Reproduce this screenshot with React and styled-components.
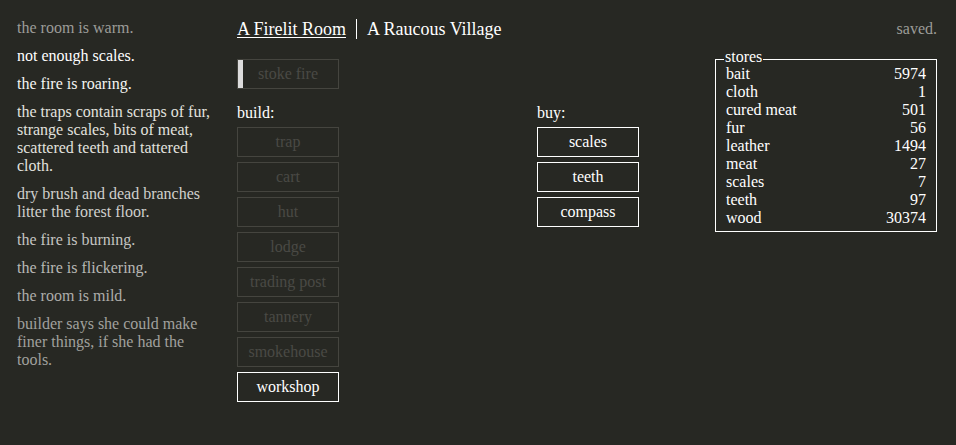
import React from 'react';
import styled, { createGlobalStyle } from 'styled-components';

const GlobalStyle = createGlobalStyle`
  html, body {
    margin: 0;
    padding: 0;
    background: #272823;
  }
  body {
    font-family: 'Liberation Serif', 'Times New Roman', serif;
    font-size: 16px;
    color: #fff;
  }
`;

const notifications = [
  { text: 'the room is warm.', color: '#9c9c98' },
  { text: 'not enough scales.', color: '#ffffff' },
  { text: 'the fire is roaring.', color: '#f4f4f2' },
  {
    text: 'the traps contain scraps of fur, strange scales, bits of meat, scattered teeth and tattered cloth.',
    color: '#e2e2df',
  },
  { text: 'dry brush and dead branches litter the forest floor.', color: '#d0d0cd' },
  { text: 'the fire is burning.', color: '#c4c4c1' },
  { text: 'the fire is flickering.', color: '#b8b8b5' },
  { text: 'the room is mild.', color: '#adadaa' },
  { text: 'builder says she could make finer things, if she had the tools.', color: '#a1a19e' },
];

const buildings = [
  { name: 'trap', on: false },
  { name: 'cart', on: false },
  { name: 'hut', on: false },
  { name: 'lodge', on: false },
  { name: 'trading post', on: false },
  { name: 'tannery', on: false },
  { name: 'smokehouse', on: false },
  { name: 'workshop', on: true },
];

const trades = ['scales', 'teeth', 'compass'];

const stores = [
  ['bait', 5974],
  ['cloth', 1],
  ['cured meat', 501],
  ['fur', 56],
  ['leather', 1494],
  ['meat', 27],
  ['scales', 7],
  ['teeth', 97],
  ['wood', 30374],
];

const Page = styled.div`
  display: flex;
  padding: 19px 19px 0 17px;
  min-height: 445px;
  box-sizing: border-box;
`;

const Notifications = styled.div`
  width: 200px;
  margin-right: 20px;
  flex-shrink: 0;
`;

const Notification = styled.div`
  color: ${({ $color }) => $color};
  line-height: 18px;
  margin-bottom: 10px;
`;

const Main = styled.div`
  flex: 1;
  display: flex;
  flex-direction: column;
`;

const Header = styled.div`
  display: flex;
  align-items: center;
  height: 20px;
  font-size: 18px;
`;

const Tab = styled.span`
  line-height: 20px;
  text-decoration: ${({ $active }) => ($active ? 'underline' : 'none')};
  text-underline-offset: 2px;
  text-decoration-thickness: 1px;
`;

const TabDivider = styled.span`
  width: 1px;
  height: 20px;
  background: #fff;
  margin: 0 10px;
`;

const Saved = styled.span`
  margin-left: auto;
  font-size: 16px;
  color: #9c9c98;
`;

const Panels = styled.div`
  display: flex;
  margin-top: 20px;
`;

const BuildColumn = styled.div`
  width: 300px;
`;

const BuyColumn = styled.div`
  width: 178px;
  padding-top: 45px;
`;

const Label = styled.div`
  line-height: 18px;
  margin-bottom: 5px;
`;

const Button = styled.div`
  position: relative;
  width: 80px;
  padding: 5px 10px;
  line-height: 18px;
  text-align: center;
  border: 1px solid ${({ $off }) => ($off ? '#45453f' : '#fff')};
  color: ${({ $off }) => ($off ? '#4a4a45' : '#fff')};
  margin-bottom: 5px;
  white-space: nowrap;
`;

const Cooldown = styled.div`
  position: absolute;
  left: 0;
  top: 0;
  bottom: 0;
  width: 5px;
  background: #dcdcdc;
`;

const Spacer = styled.div`
  height: 10px;
`;

const Stores = styled.div`
  position: relative;
  margin-left: auto;
  width: 200px;
  padding: 5px 10px 4px;
  border: 1px solid #fff;
  align-self: flex-start;
`;

const Legend = styled.div`
  position: absolute;
  top: -11px;
  left: 8px;
  padding: 0 1px;
  line-height: 16px;
  background: #272823;
`;

const StoreRow = styled.div`
  display: flex;
  justify-content: space-between;
  line-height: 18px;
`;

export default function App() {
  return (
    <>
      <GlobalStyle />
      <Page>
        <Notifications>
          {notifications.map((n, i) => (
            <Notification key={i} $color={n.color}>
              {n.text}
            </Notification>
          ))}
        </Notifications>
        <Main>
          <Header>
            <Tab $active>A Firelit Room</Tab>
            <TabDivider />
            <Tab>A Raucous Village</Tab>
            <Saved>saved.</Saved>
          </Header>
          <Panels>
            <BuildColumn>
              <Button $off>
                <Cooldown />
                stoke fire
              </Button>
              <Spacer />
              <Label>build:</Label>
              {buildings.map((b) => (
                <Button key={b.name} $off={!b.on}>
                  {b.name}
                </Button>
              ))}
            </BuildColumn>
            <BuyColumn>
              <Label>buy:</Label>
              {trades.map((t) => (
                <Button key={t}>{t}</Button>
              ))}
            </BuyColumn>
            <Stores>
              <Legend>stores</Legend>
              {stores.map(([name, n]) => (
                <StoreRow key={name}>
                  <span>{name}</span>
                  <span>{n}</span>
                </StoreRow>
              ))}
            </Stores>
          </Panels>
        </Main>
      </Page>
    </>
  );
}
